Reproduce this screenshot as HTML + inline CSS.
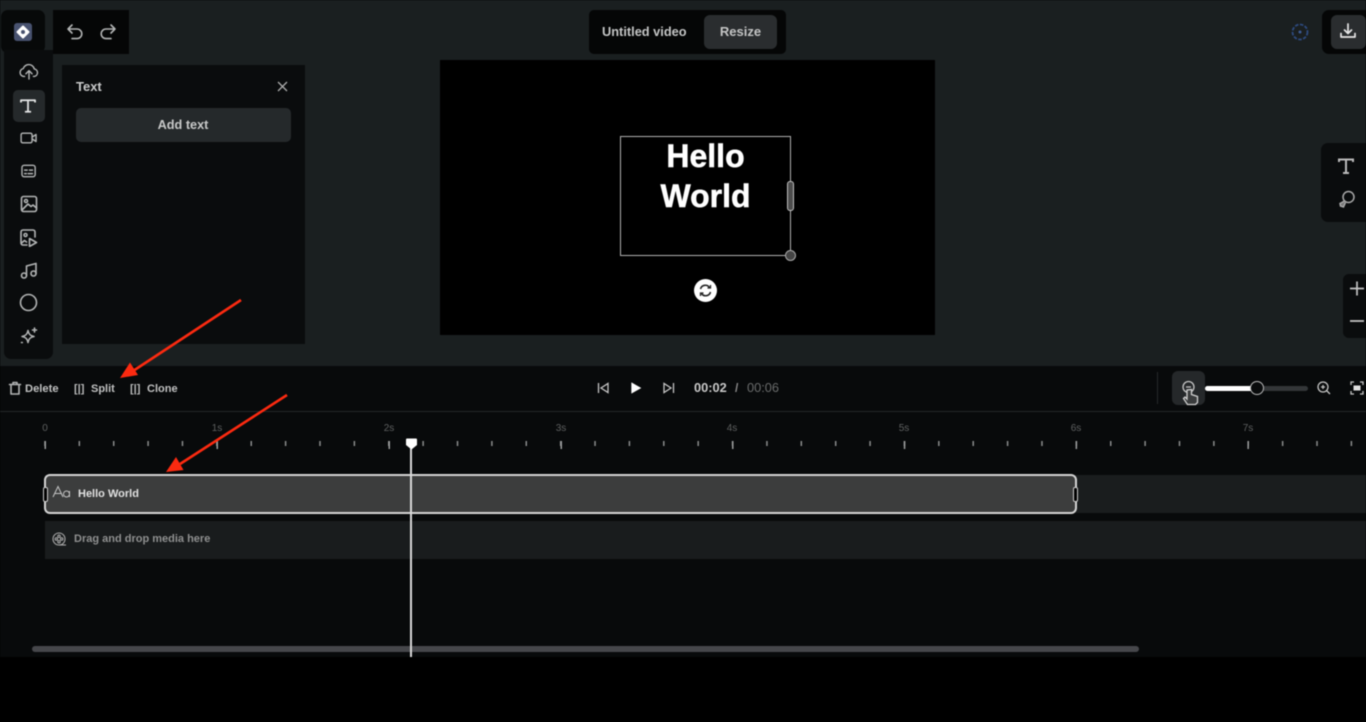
<!DOCTYPE html>
<html><head><meta charset="utf-8"><title>Untitled video</title>
<style>
html,body{margin:0;padding:0;background:#000}
body{width:1366px;height:722px;position:relative;overflow:hidden;font-family:"Liberation Sans",sans-serif}
#w{left:0;top:0;width:1366px;height:722px;filter:blur(.45px)}
div,span,svg{position:absolute}
.t{white-space:nowrap;line-height:1}
.i{fill:none;stroke:#b2b4b4;stroke-width:1.600;stroke-linecap:round;stroke-linejoin:round}
.s{transform:scale(.88)}
</style></head><body><div id="w">
<div style="left:0;top:0;width:1366px;height:366px;background:#1a1f20"></div>
<!-- top-left -->
<div style="left:1px;top:10px;width:44px;height:43px;background:#070909;border-radius:7px"></div>
<div style="left:4px;top:50px;width:49px;height:309px;background:#0a0c0d;border-radius:0 0 7px 7px"></div>
<div style="left:53px;top:10px;width:76px;height:44px;background:#050606"></div>
<div style="left:14px;top:23px;width:18px;height:18px;background:#48526f;border-radius:3px"></div>
<svg style="left:14px;top:23px" width="18" height="18"><path d="M9 3.500 L14.500 9 L9 14.500 L3.500 9Z" fill="#fff" stroke="#fff" stroke-width="2" stroke-linejoin="round"/><circle cx="9" cy="9" r="2" fill="#48526f"/></svg>
<svg class="i" style="left:66px;top:23px" width="18" height="18"><path d="M2 6h9a4.800 4.800 0 0 1 0 9.600H6M2 6l4-4M2 6l4 4"/></svg>
<svg class="i" style="left:99px;top:23px" width="18" height="18"><path d="M16 6H7a4.800 4.800 0 0 0 0 9.600h5M16 6l-4-4M16 6l-4 4"/></svg>
<!-- sidebar icons -->
<div style="left:13px;top:90px;width:32px;height:32px;background:#25292b;border-radius:5px"></div>
<svg class="i s" style="left:17px;top:61px" width="24" height="22"><path d="M7 16H6a4.500 4.500 0 0 1-.5-8.900A6.500 6.500 0 0 1 18 7.500 4.300 4.300 0 0 1 18 16h-1M12 19v-9M8.500 13l3.500-3.500 3.500 3.500"/></svg>
<svg class="s" style="left:18px;top:97px" width="20" height="18" fill="none" stroke="#e4e5e5" stroke-width="2" stroke-linejoin="round"><path d="M2 5V2.500H18V5M10 2.500V15.500M6.500 15.500H13.500"/></svg>
<svg class="i s" style="left:19px;top:130px" width="20" height="16"><rect x="1" y="2.500" width="12.500" height="11" rx="2"/><path d="M13.500 7l4.500-3v8l-4.500-3"/></svg>
<svg class="i s" style="left:20px;top:163px" width="18" height="16"><rect x="1" y="1.500" width="15" height="13" rx="2.500"/><path d="M4 7h3M9.500 7h3.500M4 11h2M8 11h5"/></svg>
<svg class="i" style="left:19.500px;top:195px" width="18" height="18"><rect x="1.500" y="1.500" width="15" height="15" rx="2"/><circle cx="6" cy="6" r="1.500"/><path d="M2 15l6-6 3 2.500 2-1.500 3.500 3"/></svg>
<svg class="i" style="left:19px;top:229px" width="20" height="18"><path d="M8 16H4a2 2 0 0 1-2-2V3a2 2 0 0 1 2-2h10a2 2 0 0 1 2 2v5"/><circle cx="6.500" cy="6" r="1.500"/><path d="M10.500 9.500l7 4-7 4zM2.500 14l3-2.500 2 1.500"/></svg>
<svg class="i" style="left:20px;top:262px" width="18" height="17"><circle cx="4" cy="13.500" r="2.500"/><circle cx="13.500" cy="11.500" r="2.500"/><path d="M6.500 13.500V4l9.500-2.500v10"/></svg>
<svg class="i" style="left:19px;top:293px" width="20" height="20"><circle cx="9.500" cy="9.500" r="8"/></svg>
<svg class="i" style="left:19px;top:326px" width="20" height="20"><path d="M9 4.500c.6 3.700 2.300 5.400 6 6-3.700.6-5.400 2.300-6 6-.6-3.700-2.300-5.400-6-6 3.700-.6 5.400-2.300 6-6zM15.500 2v4M13.500 4h4M2.500 16.500h.8"/></svg>
<!-- text panel -->
<div style="left:62px;top:65px;width:243px;height:279px;background:#0a0c0d"></div>
<div class="t" style="left:76px;top:80px;font-size:13px;font-weight:bold;color:#c8c9c9">Text</div>
<svg style="left:277px;top:81px" width="11" height="11" stroke="#aaa" stroke-width="1.300"><path d="M1 1L10 10M10 1L1 10"/></svg>
<div style="left:76px;top:108px;width:215px;height:34px;background:#25292b;border-radius:5px"></div>
<div class="t" style="left:76px;top:119px;width:214px;text-align:center;font-size:12.700px;font-weight:bold;color:#c8c9c9">Add text</div>
<!-- title -->
<div style="left:589px;top:10px;width:197px;height:44px;background:#050606;border-radius:5px"></div>
<div class="t" style="left:602px;top:26px;font-size:12.800px;font-weight:bold;color:#c4c5c5">Untitled video</div>
<div style="left:704px;top:15px;width:73px;height:34px;background:#2a2d2f;border-radius:6px"></div>
<div class="t" style="left:704px;top:25px;width:73px;text-align:center;font-size:13px;font-weight:bold;color:#c4c5c5">Resize</div>
<!-- canvas -->
<div style="left:440px;top:60px;width:495px;height:275px;background:#000"></div>
<div style="left:620px;top:136px;width:169px;height:118px;border:1.500px solid #b0b0b0"></div>
<div class="t" style="left:620px;top:136px;width:171px;text-align:center;font-size:32px;font-weight:bold;color:#fff;line-height:40px;-webkit-text-stroke:.5px #fff">Hello<br>World</div>
<div style="left:787px;top:181px;width:5px;height:28px;background:#4c4c4c;border:1px solid #c0c0c0;border-radius:3px"></div>
<div style="left:785px;top:250px;width:9px;height:9px;background:#444;border:1px solid #aaa;border-radius:50%"></div>
<div style="left:694px;top:279px;width:23px;height:23px;background:#fff;border-radius:50%"></div>
<svg style="left:694px;top:279px" width="23" height="23" fill="none" stroke="#222" stroke-width="1.600"><path d="M6.500 10a5 5 0 0 1 9-1.500M16.500 13a5 5 0 0 1-9 1.500"/><path d="M16.500 6v3h-3M6.500 17v-3h3" stroke-width="1.300"/></svg>
<!-- right -->
<svg style="left:1291px;top:23px" width="18" height="18" fill="none" stroke="#2d4a7f"><circle cx="9" cy="9" r="7.500" stroke-width="1.800" stroke-dasharray="3.500 1.500"/><circle cx="9" cy="9" r="1.500" fill="#3c5a94" stroke="none"/></svg>
<div style="left:1322px;top:10px;width:44px;height:44px;background:#050606;border-radius:7px 0 0 7px"></div>
<div style="left:1331px;top:15px;width:35px;height:34px;background:#2a2d2f;border-radius:6px"></div>
<svg style="left:1339px;top:22px" width="18" height="18" fill="none" stroke="#e6e6e6" stroke-width="1.700" stroke-linecap="round" stroke-linejoin="round"><path d="M9 2v9M5.500 8L9 11.500 12.500 8"/><path d="M2 11.500v3.500h14v-3.500"/></svg>
<div style="left:1321px;top:143px;width:45px;height:79px;background:#0a0c0d;border-radius:7px 0 0 7px"></div>
<svg style="left:1337px;top:157px" width="18" height="18" fill="none" stroke="#b9b9b9" stroke-width="2"><path d="M2 5V2.500H16V5M9 2.500V16M6 16H12"/></svg>
<svg style="left:1337px;top:189px" width="20" height="20" fill="none" stroke="#a8a8a8" stroke-width="1.500"><circle cx="11.500" cy="8" r="5.500"/><path d="M7.500 12L3 14.500 3.500 17 6.500 18 8.500 13.500" fill="#777"/></svg>
<div style="left:1343px;top:274px;width:23px;height:64px;background:#0a0c0d;border-radius:6px 0 0 6px"></div>
<svg style="left:1349px;top:280px" width="17" height="48" stroke="#c4c4c4" stroke-width="1.700"><path d="M1 8.500H15M8 1.500V15.500M1 41H15"/></svg>
<!-- toolbar -->
<div style="left:0;top:366px;width:1366px;height:291px;background:#080a0b"></div>
<div style="left:0;top:411px;width:1366px;height:1px;background:#242728"></div>
<svg class="i" style="left:8px;top:381px" width="14" height="14" stroke-width="1.300"><path d="M1.500 3.500h11M5 3.500V1.500h4v2M3 3.500V13h8V3.500"/></svg>
<div class="t" style="left:25px;top:383.500px;font-size:11.200px;font-weight:bold;color:#c0c1c1">Delete</div>
<div class="t" style="left:74px;top:383.500px;font-size:11px;font-weight:bold;color:#b9baba">[|]</div>
<div class="t" style="left:91px;top:383.500px;font-size:11px;font-weight:bold;color:#c0c1c1">Split</div>
<div class="t" style="left:130px;top:383.500px;font-size:11px;font-weight:bold;color:#b9baba">[|]</div>
<div class="t" style="left:147px;top:383.500px;font-size:11px;font-weight:bold;color:#c0c1c1">Clone</div>
<svg style="left:597px;top:382px" width="80" height="12" fill="none" stroke="#c4c4c4" stroke-width="1.300"><path d="M1.500 1v10M11 1.500v9L4 6z"/><path d="M35 1.500L43 6 35 10.500z" fill="#fff" stroke="#fff"/><path d="M67 1.500v9l7-4.500zM76.500 1v10"/></svg>
<div class="t" style="left:694px;top:382px;font-size:12.800px;font-weight:bold;color:#c8c8c8">00:02</div>
<div class="t" style="left:735px;top:382px;font-size:12px;font-weight:bold;color:#8a8a8a">/</div>
<div class="t" style="left:747px;top:382px;font-size:12.800px;color:#6a6c6c">00:06</div>
<div style="left:1157px;top:372px;width:1px;height:32px;background:#26292a"></div>
<div style="left:1172px;top:371px;width:33px;height:34px;background:#25282a;border-radius:6px"></div>
<svg style="left:1180px;top:379px" width="22" height="30" fill="none" stroke="#c4c4c4" stroke-width="1.300"><circle cx="8.500" cy="8" r="5.500"/><path d="M6 8h5"/><path d="M7 11v9l-2-2-1.500 1.500 4 6h8l2-2v-6l-6-2v-5z" fill="#3a3c3d" stroke="#d0d0d0"/></svg>
<div style="left:1205px;top:386px;width:103px;height:5px;background:#333638;border-radius:3px"></div>
<div style="left:1205px;top:386px;width:50px;height:5px;background:#fff;border-radius:3px"></div>
<div style="left:1250px;top:381px;width:12px;height:12px;background:#090b0c;border:1.500px solid #b8b8b8;border-radius:50%"></div>
<svg style="left:1317px;top:381px" width="14" height="14" fill="none" stroke="#c4c4c4" stroke-width="1.300"><circle cx="6" cy="6" r="5"/><path d="M4 6h4M6 4v4M9.500 9.500L13 13"/></svg>
<svg style="left:1350px;top:381px" width="14" height="14" fill="none" stroke="#c4c4c4" stroke-width="1.300"><path d="M1 4V1h3M10 1h3v3M13 10v3h-3M4 13H1v-3"/><rect x="3.500" y="4.500" width="7" height="5" fill="#e0e0e0" stroke="none"/></svg>
<!-- ruler -->
<svg style="left:0;top:420px" width="1366" height="30">
<defs><pattern id="m" x="44.200" y="0" width="34.380" height="30" patternUnits="userSpaceOnUse"><rect x="0" y="21" width="1.500" height="5" fill="#8a8c8c"/></pattern></defs>
<rect x="44" y="0" width="1322" height="30" fill="url(#m)"/>
<g fill="#9a9c9c"><rect x="44.500" y="21" width="1.500" height="8"/><rect x="216.500" y="21" width="1.500" height="8"/><rect x="388.500" y="21" width="1.500" height="8"/><rect x="560.500" y="21" width="1.500" height="8"/><rect x="732" y="21" width="1.500" height="8"/><rect x="903.800" y="21" width="1.500" height="8"/><rect x="1075.600" y="21" width="1.500" height="8"/><rect x="1247.400" y="21" width="1.500" height="8"/></g>
<g font-family="Liberation Sans" font-size="10" fill="#5e6060" text-anchor="middle"><text x="45" y="11">0</text><text x="217" y="11">1s</text><text x="389" y="11">2s</text><text x="561" y="11">3s</text><text x="732" y="11">4s</text><text x="904" y="11">5s</text><text x="1076" y="11">6s</text><text x="1248" y="11">7s</text></g>
</svg>
<!-- tracks -->
<div style="left:45px;top:475px;width:1321px;height:38px;background:#1a1d1e"></div>
<div style="left:45px;top:521px;width:1321px;height:38px;background:#191c1d"></div>
<div style="left:44px;top:474px;width:1029px;height:36px;background:#3c3d3d;border:2px solid #d4d4d4;border-radius:6px"></div>
<div style="left:43px;top:487px;width:3px;height:13px;background:#000;border:1px solid #ccc;border-radius:2px"></div>
<div style="left:1073px;top:487px;width:3px;height:13px;background:#000;border:1px solid #ccc;border-radius:2px"></div>
<svg style="left:52px;top:485px" width="20" height="15" fill="none" stroke="#c4c4c4" stroke-width="1"><path d="M1 12L6 1.500 11 12M3 8.500h6"/><circle cx="14.500" cy="9" r="3"/><path d="M17.500 6v6"/></svg>
<div class="t" style="left:78px;top:488.500px;font-size:11px;font-weight:bold;color:#e0e0e0">Hello World</div>
<svg style="left:52px;top:532px" width="15" height="15" fill="none" stroke="#a8a8a8" stroke-width="1.100"><circle cx="7" cy="7" r="6"/><circle cx="7" cy="4.300" r="1.200"/><circle cx="7" cy="9.700" r="1.200"/><circle cx="4.300" cy="7" r="1.200"/><circle cx="9.700" cy="7" r="1.200"/><path d="M7 13h7"/></svg>
<div class="t" style="left:74px;top:534px;font-size:11px;font-weight:bold;color:#8f9090">Drag and drop media here</div>
<!-- scrollbar -->
<div style="left:32px;top:646px;width:1107px;height:6px;background:#46474b;border-radius:3px"></div>
<!-- playhead -->
<div style="left:410px;top:444px;width:2px;height:213px;background:#d8d8d8"></div>
<svg style="left:405px;top:438px" width="13" height="12"><path d="M1 1.500a1 1 0 0 1 1-1h9a1 1 0 0 1 1 1V7L6.500 11.500 1 7z" fill="#fff"/></svg>
<!-- arrows -->
<svg style="left:0;top:0" width="1366" height="722" fill="#fb2a10" stroke="none"><path d="M241 300L133 371" stroke="#fb2a10" stroke-width="2.600" fill="none"/><path d="M120 378L130 362.500 138 375z"/><path d="M287 395L180 464" stroke="#fb2a10" stroke-width="2.600" fill="none"/><path d="M166 472L176 457 183.500 470z"/></svg>
</div></body></html>
